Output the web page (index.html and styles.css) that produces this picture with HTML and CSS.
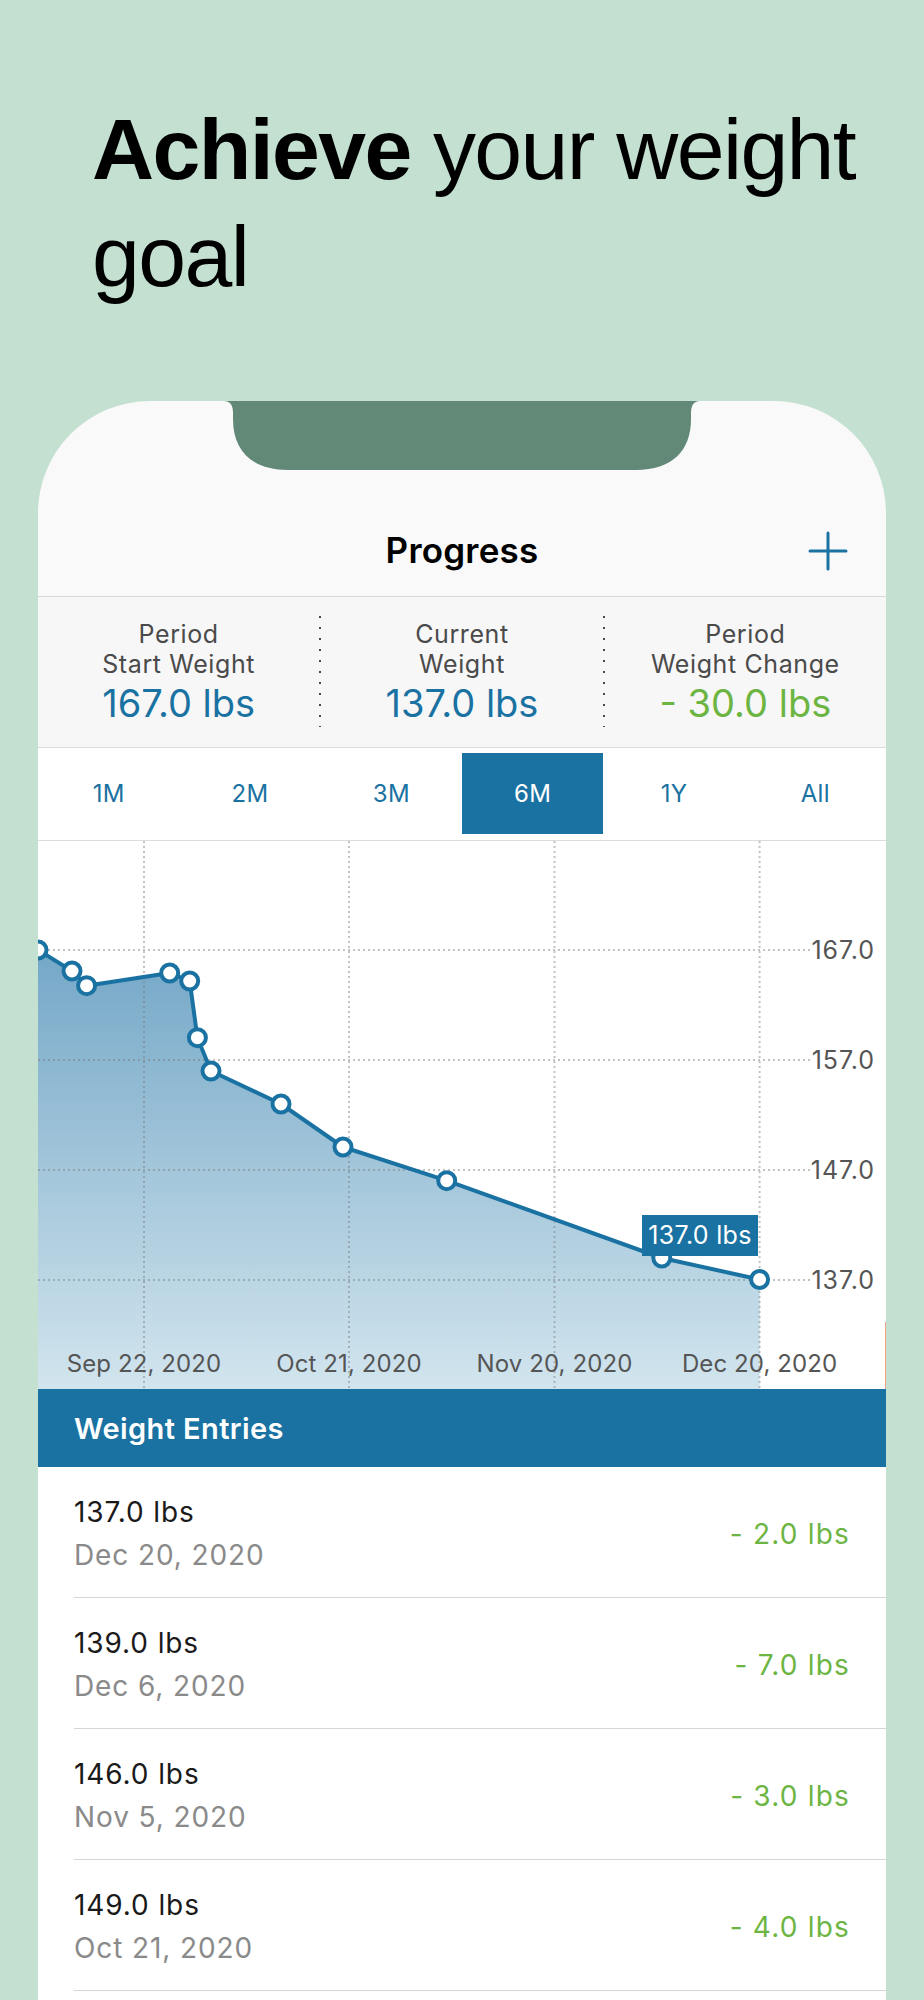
FILE: index.html
```html
<!DOCTYPE html>
<html lang="en">
<head>
<meta charset="utf-8">
<title>Achieve your weight goal</title>
<link rel="stylesheet" href="styles.css">
</head>
<body>
<header class="hero">
  <h1 class="hero-title"><strong>Achieve</strong> your weight goal</h1>
</header>

<main class="phone">
  <svg class="notch" width="476" height="69" viewBox="0 0 476 69" aria-hidden="true">
    <path d="M0,0 H476 C470,0 467,4 467,12 V18 C467,50 448,69 412,69 H64 C28,69 9,50 9,18 V12 C9,4 6,0 0,0 Z" fill="#628877"/>
  </svg>

  <nav class="navbar">
    <span></span>
    <h2 class="nav-title">Progress</h2>
    <button class="nav-add" aria-label="Add">
      <svg width="40" height="40" viewBox="0 0 40 40"><path d="M20 2 V38 M2 20 H38" stroke="#1a72a2" stroke-width="3" stroke-linecap="round" fill="none"/></svg>
    </button>
  </nav>

  <section class="stats">
    <div class="stat">
      <div class="stat-label">Period<br>Start Weight</div>
      <div class="stat-value">167.0 lbs</div>
    </div>
    <div class="stat-divider"></div>
    <div class="stat">
      <div class="stat-label">Current<br>Weight</div>
      <div class="stat-value">137.0 lbs</div>
    </div>
    <div class="stat-divider"></div>
    <div class="stat">
      <div class="stat-label">Period<br>Weight Change</div>
      <div class="stat-value stat-value-green">- 30.0 lbs</div>
    </div>
  </section>

  <section class="periods">
    <div class="period">1M</div>
    <div class="period">2M</div>
    <div class="period">3M</div>
    <div class="period period-active">6M</div>
    <div class="period">1Y</div>
    <div class="period">All</div>
  </section>

  <section class="chart">
    <svg class="chart-svg" width="848" height="548" viewBox="0 0 848 548">
      <defs>
        <linearGradient id="fillGrad" gradientUnits="userSpaceOnUse" x1="0" y1="109" x2="0" y2="548">
          <stop offset="0" stop-color="#74a7c7"/>
          <stop offset="1" stop-color="#d2e5ee"/>
        </linearGradient>
      </defs>
      <polygon fill="url(#fillGrad)" points="0,109 34,130 48.6,144.7 131.7,132 151.7,140 159.4,196.7 173,230 243,263 305,306 408.7,339.7 623.8,417 721.6,438.5 721.6,548 0,548"/>
      <g class="grid">
        <line x1="106" y1="0" x2="106" y2="548"/>
        <line x1="311" y1="0" x2="311" y2="548"/>
        <line x1="516.5" y1="0" x2="516.5" y2="548"/>
        <line x1="721.6" y1="0" x2="721.6" y2="548"/>
        <line x1="0" y1="109" x2="772" y2="109"/>
        <line x1="0" y1="219" x2="772" y2="219"/>
        <line x1="0" y1="329" x2="772" y2="329"/>
        <line x1="0" y1="439" x2="772" y2="439"/>
      </g>
      <g class="y-labels">
        <text x="837" y="118">167.0</text>
        <text x="837" y="228">157.0</text>
        <text x="837" y="338">147.0</text>
        <text x="837" y="448">137.0</text>
      </g>
      <g class="x-labels">
        <text x="106" y="531">Sep 22, 2020</text>
        <text x="311" y="531">Oct 21, 2020</text>
        <text x="516.5" y="531">Nov 20, 2020</text>
        <text x="721.6" y="531">Dec 20, 2020</text>
      </g>
      <polyline class="series" points="0,109 34,130 48.6,144.7 131.7,132 151.7,140 159.4,196.7 173,230 243,263 305,306 408.7,339.7 623.8,417 721.6,438.5"/>
      <g class="dots">
        <circle cx="0" cy="109" r="8.5"/>
        <circle cx="34" cy="130" r="8.5"/>
        <circle cx="48.6" cy="144.7" r="8.5"/>
        <circle cx="131.7" cy="132" r="8.5"/>
        <circle cx="151.7" cy="140" r="8.5"/>
        <circle cx="159.4" cy="196.7" r="8.5"/>
        <circle cx="173" cy="230" r="8.5"/>
        <circle cx="243" cy="263" r="8.5"/>
        <circle cx="305" cy="306" r="8.5"/>
        <circle cx="408.7" cy="339.7" r="8.5"/>
        <circle cx="623.8" cy="417" r="8.5"/>
        <circle cx="721.6" cy="438.5" r="8.5"/>
      </g>
      <rect class="tip-box" x="604" y="374" width="116" height="41"/>
      <text class="tip-text" x="662" y="403">137.0 lbs</text>
      <line class="edge-mark" x1="847.5" y1="481" x2="847.5" y2="548"/>
    </svg>
  </section>

  <section class="entries">
    <h3 class="entries-title">Weight Entries</h3>
    <ul class="entry-list">
      <li class="entry">
        <div class="entry-main"><span class="entry-weight">137.0 lbs</span><span class="entry-date">Dec 20, 2020</span></div>
        <span class="entry-change">- 2.0 lbs</span>
      </li>
      <li class="entry">
        <div class="entry-main"><span class="entry-weight">139.0 lbs</span><span class="entry-date">Dec 6, 2020</span></div>
        <span class="entry-change">- 7.0 lbs</span>
      </li>
      <li class="entry">
        <div class="entry-main"><span class="entry-weight">146.0 lbs</span><span class="entry-date">Nov 5, 2020</span></div>
        <span class="entry-change">- 3.0 lbs</span>
      </li>
      <li class="entry">
        <div class="entry-main"><span class="entry-weight">149.0 lbs</span><span class="entry-date">Oct 21, 2020</span></div>
        <span class="entry-change">- 4.0 lbs</span>
      </li>
      <li class="entry">
        <div class="entry-main"><span class="entry-weight">153.0 lbs</span><span class="entry-date">Oct 3, 2020</span></div>
        <span class="entry-change">- 2.0 lbs</span>
      </li>
    </ul>
  </section>
</main>
</body>
</html>
```

FILE: styles.css
```css
* { box-sizing: border-box; }

html, body {
  margin: 0;
  padding: 0;
}

body {
  background: #c3e0d1;
  font-family: "Inter", "Liberation Sans", sans-serif;
  color: #000;
  overflow: hidden;
  height: 2000px;
}

.hero {
  padding: 96px 0 0 92px;
}

.hero-title {
  margin: 0;
  width: 800px;
  font-family: "Liberation Sans", "Inter", sans-serif;
  font-size: 86px;
  line-height: 107px;
  font-weight: 400;
  letter-spacing: -1.6px;
}

.hero-title strong {
  font-weight: 700;
}

.phone {
  margin: 91px 0 0 38px;
  width: 848px;
  background: #f9f9f9;
  border-radius: 112px 112px 0 0;
  overflow: hidden;
}

.notch {
  display: block;
  margin: 0 auto;
}

.navbar {
  height: 127px;
  padding: 35px 39px 0;
  display: grid;
  grid-template-columns: 1fr auto 1fr;
  align-items: center;
  border-bottom: 1px solid #d9d9d9;
}

.nav-title {
  margin: 0;
  font-size: 35px;
  line-height: 1;
  font-weight: 600;
  letter-spacing: 0.2px;
}

.nav-add {
  justify-self: end;
  width: 40px;
  height: 40px;
  padding: 0;
  border: 0;
  background: none;
  margin-right: -1px;
}

.nav-add svg {
  display: block;
}

.stats {
  display: grid;
  grid-template-columns: 1fr 2px 1fr 2px 1fr;
  height: 151px;
  background: #f7f7f7;
  border-bottom: 1px solid #dcdcdc;
  padding-top: 22px;
}

.stat {
  text-align: center;
}

.stat-label {
  font-size: 25px;
  line-height: 30px;
  color: #4a4a4a;
  letter-spacing: 0.6px;
}

.stat-value {
  margin-top: 2px;
  font-size: 38px;
  line-height: 45px;
  color: #1a72a2;
  letter-spacing: 0;
}

.stat-value-green {
  color: #6db543;
}

.stat-divider {
  margin: -3px 0 20px;
  background-image: repeating-linear-gradient(to bottom, #4a4a4a 0 2px, transparent 2px 11px);
  width: 2px;
  justify-self: center;
}

.periods {
  display: grid;
  grid-template-columns: repeat(6, 1fr);
  height: 93px;
  padding: 5px 0 6px;
  background: #fff;
  border-bottom: 1px solid #dcdcdc;
}

.period {
  display: flex;
  align-items: center;
  justify-content: center;
  font-size: 24px;
  letter-spacing: 0.3px;
  color: #1a72a2;
}

.period-active {
  background: #1a72a2;
  color: #fff;
}

.chart {
  background: #fff;
  height: 548px;
}

.chart-svg {
  display: block;
}

.grid line {
  stroke: rgba(120, 120, 120, 0.45);
  stroke-width: 2;
  stroke-dasharray: 2 3;
}

.y-labels text {
  font-family: "Inter", "Liberation Sans", sans-serif;
  font-size: 25px;
  fill: #555;
  text-anchor: end;
  letter-spacing: 0.9px;
}

.x-labels text {
  font-family: "Inter", "Liberation Sans", sans-serif;
  font-size: 24px;
  fill: #555;
  text-anchor: middle;
  letter-spacing: 0.1px;
}

.series {
  fill: none;
  stroke: #1a72a2;
  stroke-width: 4;
  stroke-linejoin: round;
}

.dots circle {
  fill: #fff;
  stroke: #1a72a2;
  stroke-width: 4;
}

.tip-box {
  fill: #1a72a2;
}

.tip-text {
  font-family: "Inter", "Liberation Sans", sans-serif;
  font-size: 25px;
  fill: #fff;
  text-anchor: middle;
  letter-spacing: 0.3px;
}

.edge-mark {
  stroke: #f0a486;
  stroke-width: 1;
}

.entries {
  background: #fff;
}

.entries-title {
  margin: 0;
  height: 78px;
  padding-left: 36px;
  display: flex;
  align-items: center;
  background: #1a72a2;
  color: #fff;
  font-size: 29px;
  font-weight: 600;
  letter-spacing: 0.4px;
}

.entry-list {
  list-style: none;
  margin: 0;
  padding: 0;
}

.entry {
  margin-left: 36px;
  height: 131px;
  padding: 4px 36px 0 0;
  display: flex;
  align-items: center;
  justify-content: space-between;
  border-bottom: 1px solid #d6d6d6;
}

.entry-main {
  display: flex;
  flex-direction: column;
}

.entry-weight,
.entry-date {
  font-size: 28px;
  line-height: 43px;
  letter-spacing: 0.9px;
}

.entry-weight {
  color: #1a1a1a;
}

.entry-date {
  color: #8a8a8a;
}

.entry-change {
  font-size: 28px;
  line-height: 43px;
  color: #6db543;
  letter-spacing: 1.2px;
}
```
